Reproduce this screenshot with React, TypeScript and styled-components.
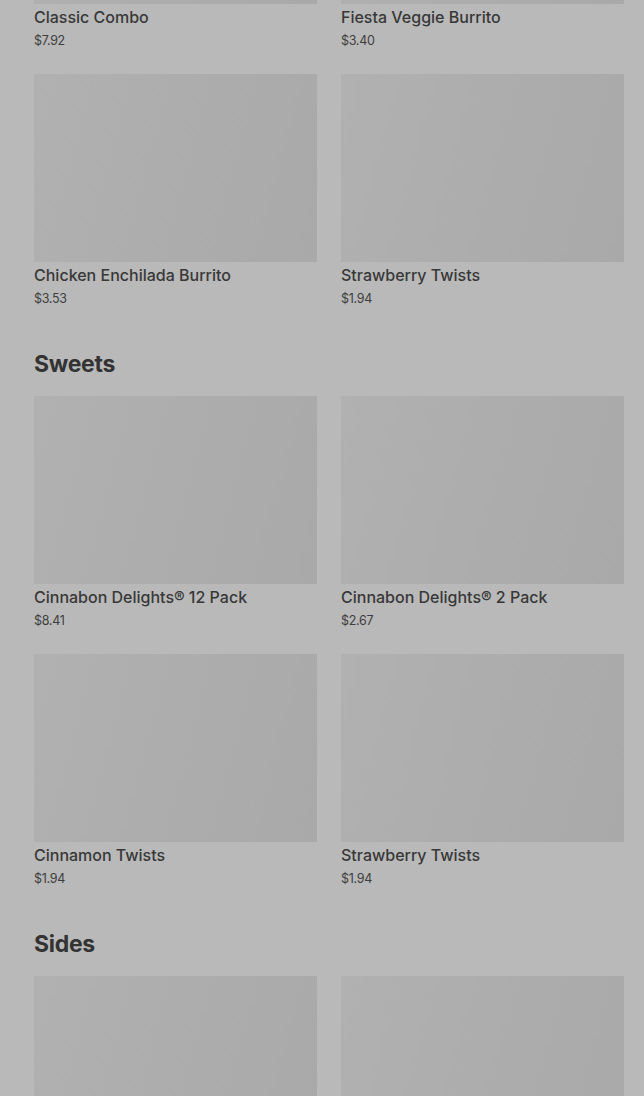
import styled, { createGlobalStyle } from 'styled-components';

const GlobalStyle = createGlobalStyle`
  html, body {
    margin: 0;
    padding: 0;
    background: #b9b9b9;
  }
  body {
    font-family: Inter, "Noto Sans", "Liberation Sans", sans-serif;
    overflow: hidden;
  }
`;

type MenuItem = { name: string; price: string };
type Section = { title?: string; items: MenuItem[] };

const sections: Section[] = [
  {
    items: [
      { name: 'Classic Combo', price: '$7.92' },
      { name: 'Fiesta Veggie Burrito', price: '$3.40' },
      { name: 'Chicken Enchilada Burrito', price: '$3.53' },
      { name: 'Strawberry Twists', price: '$1.94' },
    ],
  },
  {
    title: 'Sweets',
    items: [
      { name: 'Cinnabon Delights® 12 Pack', price: '$8.41' },
      { name: 'Cinnabon Delights® 2 Pack', price: '$2.67' },
      { name: 'Cinnamon Twists', price: '$1.94' },
      { name: 'Strawberry Twists', price: '$1.94' },
    ],
  },
  {
    title: 'Sides',
    items: [
      { name: 'Nachos BellGrande®', price: '$5.49' },
      { name: 'Chips and Nacho Cheese Sauce', price: '$1.99' },
    ],
  },
];

const Page = styled.main`
  margin-top: -184px;
  padding: 0 20px 0 34px;
  display: flex;
  flex-direction: column;
`;

const MenuSection = styled.section`
  & + & {
    margin-top: 41px;
  }
`;

const SectionTitle = styled.h2`
  margin: 0 0 16px;
  font-size: 23px;
  line-height: 32px;
  font-weight: 700;
  color: #333333;
  letter-spacing: -0.3px;
`;

const Grid = styled.div`
  display: grid;
  grid-template-columns: 283px 283px;
  column-gap: 24px;
  row-gap: 25px;
`;

const Card = styled.article`
  display: flex;
  flex-direction: column;
`;

const Thumb = styled.div`
  height: 188px;
  background: linear-gradient(105deg, #b1b1b1 0%, #adadad 45%, #a9a9a9 100%);
`;

const Name = styled.div`
  margin-top: 3px;
  font-size: 16px;
  line-height: 20px;
  font-weight: 500;
  color: #383838;
  white-space: nowrap;
`;

const Price = styled.div`
  margin-top: 5px;
  font-size: 12.5px;
  line-height: 17px;
  color: #3e3e3e;
  letter-spacing: -0.3px;
`;

export default function App() {
  return (
    <>
      <GlobalStyle />
      <Page>
        {sections.map((section, i) => (
          <MenuSection key={i}>
            {section.title && <SectionTitle>{section.title}</SectionTitle>}
            <Grid>
              {section.items.map((item, j) => (
                <Card key={j}>
                  <Thumb />
                  <Name>{item.name}</Name>
                  <Price>{item.price}</Price>
                </Card>
              ))}
            </Grid>
          </MenuSection>
        ))}
      </Page>
    </>
  );
}
